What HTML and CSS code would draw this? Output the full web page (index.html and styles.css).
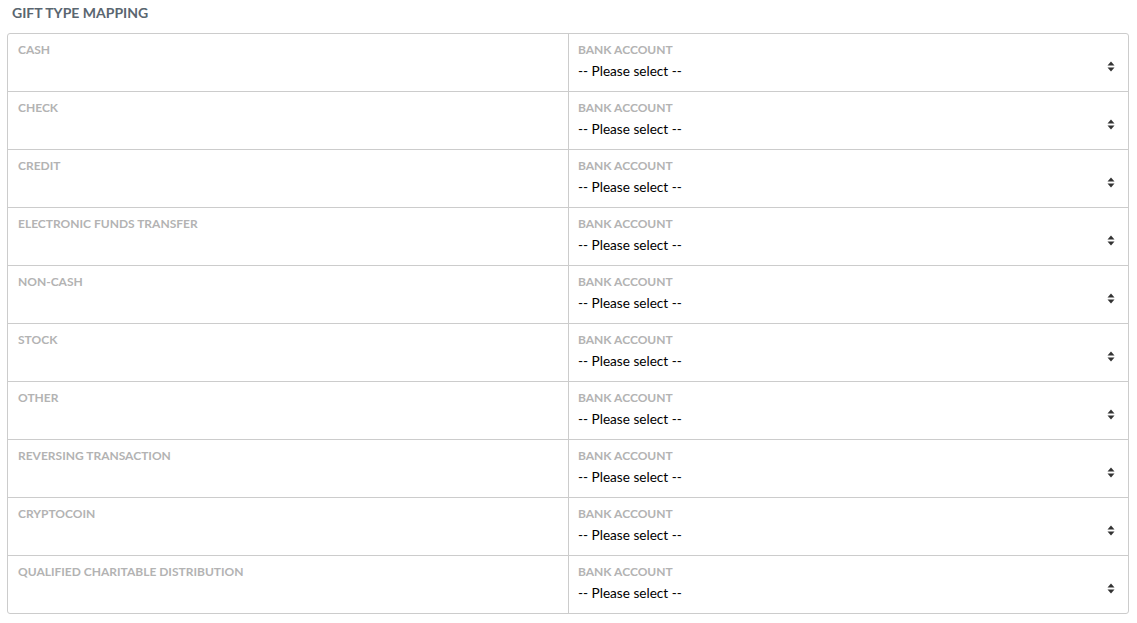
FILE: index.html
```html
<!DOCTYPE html>
<html>
<head>
<meta charset="utf-8">
<link rel="stylesheet" href="styles.css">
</head>
<body>
<div class="page">
  <h2 class="title">GIFT TYPE MAPPING</h2>
  <div class="table">
    <div class="row"><div class="cell name">CASH</div><div class="cell acct"><div class="lbl">BANK ACCOUNT</div><div class="select"><span>-- Please select --</span><svg class="arrow" width="8" height="11" viewBox="0 0 8 11"><path d="M4 0.5L7.5 4.5H0.5Z M4 10.5L7.5 6.5H0.5Z"/></svg></div></div></div>
    <div class="row"><div class="cell name">CHECK</div><div class="cell acct"><div class="lbl">BANK ACCOUNT</div><div class="select"><span>-- Please select --</span><svg class="arrow" width="8" height="11" viewBox="0 0 8 11"><path d="M4 0.5L7.5 4.5H0.5Z M4 10.5L7.5 6.5H0.5Z"/></svg></div></div></div>
    <div class="row"><div class="cell name">CREDIT</div><div class="cell acct"><div class="lbl">BANK ACCOUNT</div><div class="select"><span>-- Please select --</span><svg class="arrow" width="8" height="11" viewBox="0 0 8 11"><path d="M4 0.5L7.5 4.5H0.5Z M4 10.5L7.5 6.5H0.5Z"/></svg></div></div></div>
    <div class="row"><div class="cell name">ELECTRONIC FUNDS TRANSFER</div><div class="cell acct"><div class="lbl">BANK ACCOUNT</div><div class="select"><span>-- Please select --</span><svg class="arrow" width="8" height="11" viewBox="0 0 8 11"><path d="M4 0.5L7.5 4.5H0.5Z M4 10.5L7.5 6.5H0.5Z"/></svg></div></div></div>
    <div class="row"><div class="cell name">NON-CASH</div><div class="cell acct"><div class="lbl">BANK ACCOUNT</div><div class="select"><span>-- Please select --</span><svg class="arrow" width="8" height="11" viewBox="0 0 8 11"><path d="M4 0.5L7.5 4.5H0.5Z M4 10.5L7.5 6.5H0.5Z"/></svg></div></div></div>
    <div class="row"><div class="cell name">STOCK</div><div class="cell acct"><div class="lbl">BANK ACCOUNT</div><div class="select"><span>-- Please select --</span><svg class="arrow" width="8" height="11" viewBox="0 0 8 11"><path d="M4 0.5L7.5 4.5H0.5Z M4 10.5L7.5 6.5H0.5Z"/></svg></div></div></div>
    <div class="row"><div class="cell name">OTHER</div><div class="cell acct"><div class="lbl">BANK ACCOUNT</div><div class="select"><span>-- Please select --</span><svg class="arrow" width="8" height="11" viewBox="0 0 8 11"><path d="M4 0.5L7.5 4.5H0.5Z M4 10.5L7.5 6.5H0.5Z"/></svg></div></div></div>
    <div class="row"><div class="cell name">REVERSING TRANSACTION</div><div class="cell acct"><div class="lbl">BANK ACCOUNT</div><div class="select"><span>-- Please select --</span><svg class="arrow" width="8" height="11" viewBox="0 0 8 11"><path d="M4 0.5L7.5 4.5H0.5Z M4 10.5L7.5 6.5H0.5Z"/></svg></div></div></div>
    <div class="row"><div class="cell name">CRYPTOCOIN</div><div class="cell acct"><div class="lbl">BANK ACCOUNT</div><div class="select"><span>-- Please select --</span><svg class="arrow" width="8" height="11" viewBox="0 0 8 11"><path d="M4 0.5L7.5 4.5H0.5Z M4 10.5L7.5 6.5H0.5Z"/></svg></div></div></div>
    <div class="row"><div class="cell name">QUALIFIED CHARITABLE DISTRIBUTION</div><div class="cell acct"><div class="lbl">BANK ACCOUNT</div><div class="select"><span>-- Please select --</span><svg class="arrow" width="8" height="11" viewBox="0 0 8 11"><path d="M4 0.5L7.5 4.5H0.5Z M4 10.5L7.5 6.5H0.5Z"/></svg></div></div></div>
  </div>
</div>
</body>
</html>
```

FILE: styles.css
```css
html, body {
  margin: 0;
  padding: 0;
  background: #ffffff;
  font-family: Lato, "Liberation Sans", Arial, sans-serif;
}
.page {
  padding: 0 8px 0 7px;
}
.title {
  margin: 0;
  padding: 4px 0 0 5px;
  height: 33px;
  box-sizing: border-box;
  font-size: 14px;
  line-height: 18px;
  font-weight: 700;
  color: #5a6670;
}
.table {
  border: 1px solid #cccccc;
  border-radius: 3px;
}
.row {
  display: grid;
  grid-template-columns: 560px 1fr;
  height: 58px;
  box-sizing: border-box;
  border-bottom: 1px solid #cccccc;
}
.row:last-child {
  border-bottom: none;
  height: 57px;
}
.cell {
  padding: 8px 10px 0 10px;
  box-sizing: border-box;
}
.name, .lbl {
  font-size: 12px;
  line-height: 15px;
  font-weight: 700;
  color: #b3b3b3;
}
.acct {
  border-left: 1px solid #cccccc;
  padding-left: 9px;
}
.select {
  position: relative;
  font-size: 13.6px;
  line-height: 28px;
  color: #000000;
  height: 28px;
}
.arrow {
  position: absolute;
  right: 3px;
  top: 4px;
  fill: #333333;
}
```
